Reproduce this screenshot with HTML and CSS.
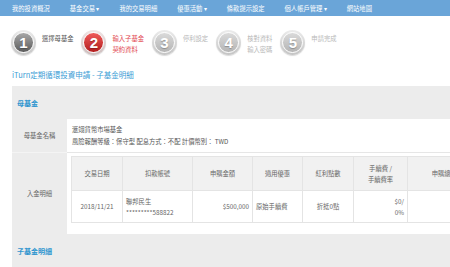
FILE: index.html
```html
<!DOCTYPE html>
<html>
<head>
  <title>iTurn定期循環投資申請 - 子基金明細</title>
  <meta charset="utf-8">
  <meta name="viewport" content="width=device-width, initial-scale=1.0">
  <link rel="stylesheet" href="styles.css">
</head>
<body>
  <div class="nav">
    <span class="nav-item">我的投資概況</span>
    <span class="nav-item">基金交易 <span class="caret">▾</span></span>
    <span class="nav-item">我的交易明細</span>
    <span class="nav-item">優惠活動 <span class="caret">▾</span></span>
    <span class="nav-item">條款提示設定</span>
    <span class="nav-item">個人帳戶管理 <span class="caret">▾</span></span>
    <span class="nav-item">網站地圖</span>
  </div>

  <div class="steps">
    <div class="step done">
      <div class="num"><span>1</span></div>
      <div class="step-text">選擇母基金</div>
    </div>
    <div class="step active">
      <div class="num"><span>2</span></div>
      <div class="step-text">輸入子基金<br>契約資料</div>
    </div>
    <div class="step">
      <div class="num"><span>3</span></div>
      <div class="step-text">停利設定</div>
    </div>
    <div class="step">
      <div class="num"><span>4</span></div>
      <div class="step-text">核對資料<br>輸入密碼</div>
    </div>
    <div class="step">
      <div class="num"><span>5</span></div>
      <div class="step-text">申請完成</div>
    </div>
  </div>

  <h1 class="title">iTurn定期循環投資申請 - 子基金明細</h1>

  <div class="panel">
    <div class="panel-head">母基金</div>

    <div class="form-row row-fund">
      <div class="label">母基金名稱</div>
      <div class="value">
        <div>滙翊貨幣市場基金</div>
        <div>風險報酬等級：保守型 配息方式：不配 計價幣別： TWD</div>
      </div>
    </div>

    <div class="form-row row-deposit">
      <div class="label">入金明細</div>
      <div class="value">
        <table class="detail">
          <colgroup>
            <col style="width: 51px">
            <col style="width: 70px">
            <col style="width: 60px">
            <col style="width: 50px">
            <col style="width: 51px">
            <col style="width: 54px">
            <col style="width: 80px">
          </colgroup>
          <thead>
            <tr>
              <th>交易日期</th>
              <th>扣款帳號</th>
              <th>申購金額</th>
              <th>適用優惠</th>
              <th>紅利點數</th>
              <th>手續費 /<br>手續費率</th>
              <th>申購總價金</th>
            </tr>
          </thead>
          <tbody>
            <tr>
              <td class="center">2018/11/21</td>
              <td>聯邦民生<br>*********588822</td>
              <td class="right">$500,000</td>
              <td>原始手續費</td>
              <td class="center">折抵0點</td>
              <td class="right">$0/<br>0%</td>
              <td class="right">$500,000</td>
            </tr>
          </tbody>
        </table>
      </div>
    </div>

    <div class="panel-head">子基金明細</div>
  </div>
</body>
</html>
```

FILE: styles.css
```css
* {
  margin: 0;
  padding: 0;
  box-sizing: border-box;
}

body {
  font-family: "Noto Sans CJK TC", "Noto Sans", sans-serif;
  background: white;
  color: #666;
  width: 450px;
  overflow: hidden;
}

.nav {
  height: 16px;
  background: #6aa5d8;
  color: white;
  font-size: 6.3px;
  display: flex;
  align-items: center;
  padding-left: 12px;
  gap: 20px;
  white-space: nowrap;
}

.caret {
  font-size: 6px;
}

.steps {
  display: flex;
  align-items: flex-start;
  padding: 14px 0 0 11px;
  gap: 8px;
  height: 39px;
}

.step {
  display: flex;
  align-items: flex-start;
  gap: 6px;
}

.num {
  width: 25px;
  height: 25px;
  flex: none;
  border-radius: 50%;
  padding: 2px;
  background: linear-gradient(#ececec, #c4c4c4);
  box-shadow: 0 1px 1px rgba(0,0,0,0.15);
}

.num span {
  display: flex;
  width: 100%;
  height: 100%;
  align-items: center;
  justify-content: center;
  border-radius: 50%;
  border: 1px solid white;
  background: linear-gradient(#dadada, #b5b5b5);
  color: white;
  font-family: "Liberation Sans", Arial, sans-serif;
  font-weight: bold;
  font-size: 15px;
  text-shadow: 0 1px 1px rgba(0,0,0,0.25);
}

.step.done .num span {
  background: linear-gradient(#a8a8a8, #5c5c5c);
}

.step.active .num {
  background: linear-gradient(#f0e6e6, #cdbcbc);
}

.step.active .num span {
  background: linear-gradient(#ef5a5a, #b31e1e);
}

.step-text {
  font-size: 6.3px;
  line-height: 11px;
  padding-top: 3px;
  color: #b8b8b8;
  white-space: nowrap;
}

.step.done .step-text {
  color: #555;
}

.step.active .step-text {
  color: #e2474f;
}

.title {
  font-size: 7.5px;
  font-weight: normal;
  color: #3a9cd5;
  line-height: 10px;
  padding: 15px 0 0 12px;
  height: 31px;
}

.panel {
  margin-left: 12px;
  width: 620px;
  background: #ececec;
}

.panel-head {
  height: 33px;
  display: flex;
  align-items: center;
  padding-left: 5px;
  color: #2f95cf;
  font-weight: bold;
  font-size: 7px;
}

.form-row {
  display: grid;
  grid-template-columns: 55px 1fr;
}

.label {
  display: flex;
  align-items: center;
  justify-content: center;
  font-size: 6.3px;
  color: #666;
}

.value {
  background: white;
  font-size: 6.3px;
  color: #555;
}

.row-fund .value {
  height: 33px;
  padding: 5px 5px 0;
  line-height: 12px;
}

.row-deposit .label {
  border-top: 1px solid #f4f4f4;
}

.row-deposit .value {
  border-top: 1px solid #e6e6e6;
  padding: 3px 0 11px 4px;
}

.detail {
  border-collapse: collapse;
  table-layout: fixed;
  font-size: 6.3px;
  color: #666;
}

.detail th,
.detail td {
  border: 1px solid #e4e4e4;
  line-height: 11px;
  padding: 0 3px;
  font-weight: normal;
}

.detail th {
  background: #f1f1f1;
  height: 34px;
  text-align: center;
}

.detail td {
  height: 32px;
  text-align: left;
  white-space: nowrap;
}

.detail td.center {
  text-align: center;
}

.detail td.right {
  text-align: right;
}
```
